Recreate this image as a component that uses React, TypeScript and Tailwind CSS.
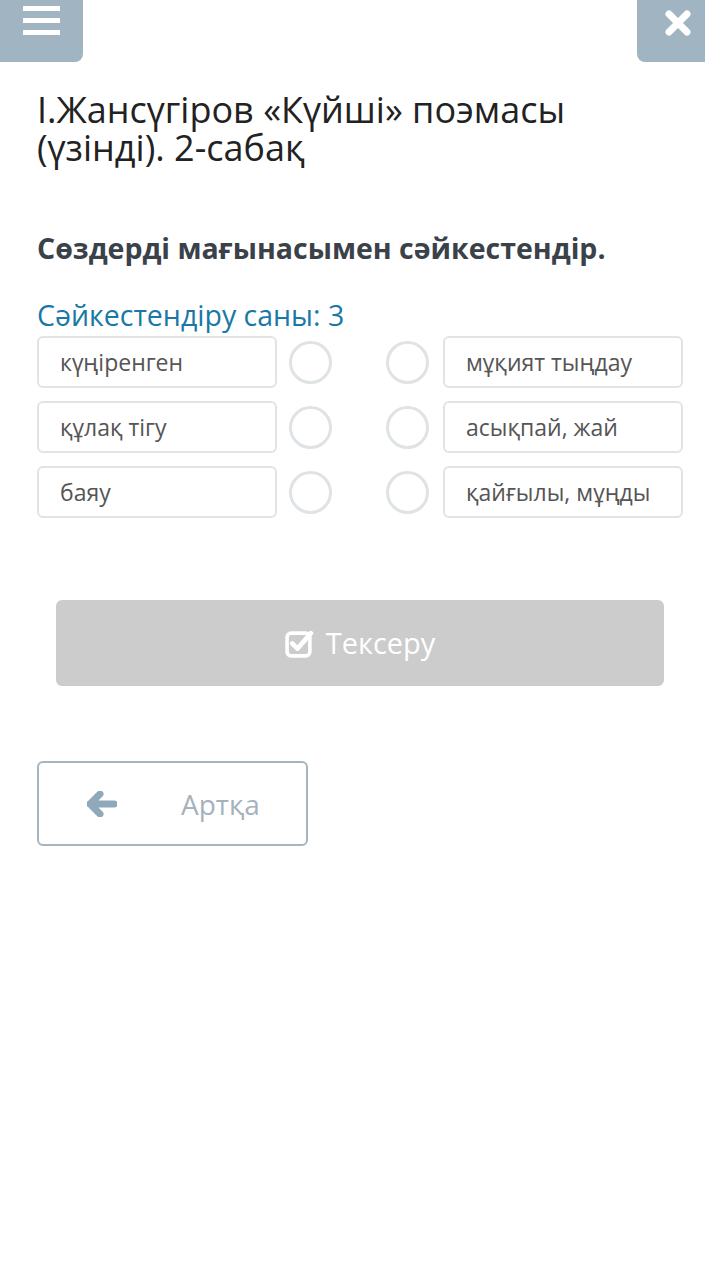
const left = ["күңіренген", "құлақ тігу", "баяу"];
const right = ["мұқият тыңдау", "асықпай, жай", "қайғылы, мұңды"];

function Circle() {
  return <div className="shrink-0 w-[43px] h-[43px] rounded-full border-[3px] border-[#dfe3e6] bg-white" />;
}

function Card({ text }: { text: string }) {
  return (
    <div className="shrink-0 w-[240px] h-[52px] rounded-md border-2 border-[#e3e3e3] flex items-center pl-[21px] text-[23px] text-[#555]">
      {text}
    </div>
  );
}

export default function App() {
  return (
    <div className="w-[705px] min-h-[1282px] bg-white" style={{ fontFamily: '"Open Sans", sans-serif' }}>
      <div className="flex justify-between items-start">
        <button className="w-[83px] h-[62px] bg-[#a0b4c2] rounded-br-lg flex flex-col items-center gap-[7px] pt-[6px]">
          <span className="block w-[37px] h-[5px] bg-white" />
          <span className="block w-[37px] h-[5px] bg-white" />
          <span className="block w-[37px] h-[5px] bg-white" />
        </button>
        <button className="w-[68px] h-[62px] bg-[#a0b4c2] rounded-bl-lg flex justify-center pt-[8px] pl-[14px]">
          <svg width="30" height="30" viewBox="0 0 30 30">
            <path d="M6 6 L24 24 M24 6 L6 24" stroke="white" strokeWidth="7" strokeLinecap="round" />
          </svg>
        </button>
      </div>

      <div className="pl-[37px] pr-[22px]">
        <h1 className="mt-[29px] text-[36px] leading-[38px] text-[#222]">
          І.Жансүгіров «Күйші» поэмасы (үзінді). 2-сабақ
        </h1>
        <h2 className="mt-[62px] text-[28.5px] leading-[38px] font-bold text-[#3a4149]">
          Сөздерді мағынасымен сәйкестендір.
        </h2>
        <div className="mt-[29px] text-[28.5px] leading-[38px] text-[#1a78a6]">Сәйкестендіру саны: 3</div>

        <div className="mt-[2px] flex flex-col gap-[13px]">
          {left.map((l, i) => (
            <div key={i} className="flex items-center">
              <Card text={l} />
              <div className="ml-[12px]"><Circle /></div>
              <div className="ml-[54px]"><Circle /></div>
              <div className="ml-[14px]"><Card text={right[i]} /></div>
            </div>
          ))}
        </div>

        <div className="px-[19px] mt-[82px]">
          <button className="w-full h-[86px] rounded-md bg-[#cccccc] flex items-center justify-center gap-[12px] text-white text-[29px]">
            <svg width="29" height="29" viewBox="0 0 28 28" fill="none">
              <rect x="2" y="4" width="22" height="22" rx="4" stroke="white" strokeWidth="3.5" />
              <path d="M7 14 L12 19 L25 4" stroke="white" strokeWidth="4.5" strokeLinecap="round" strokeLinejoin="round" />
            </svg>
            <span>Тексеру</span>
          </button>
        </div>

        <button className="mt-[75px] w-[271px] h-[85px] rounded-md border-2 border-[#a5b5c0] flex items-center pl-[48px] text-[28px] text-[#a5b2bb]">
          <svg width="30" height="26" viewBox="0 0 30 26">
            <path d="M3 13 L13 3 M3 13 L13 23 M3 13 H27" stroke="#8fa8ba" strokeWidth="7" strokeLinecap="round" strokeLinejoin="round" />
          </svg>
          <span className="ml-[64px]">Артқа</span>
        </button>
      </div>
    </div>
  );
}
